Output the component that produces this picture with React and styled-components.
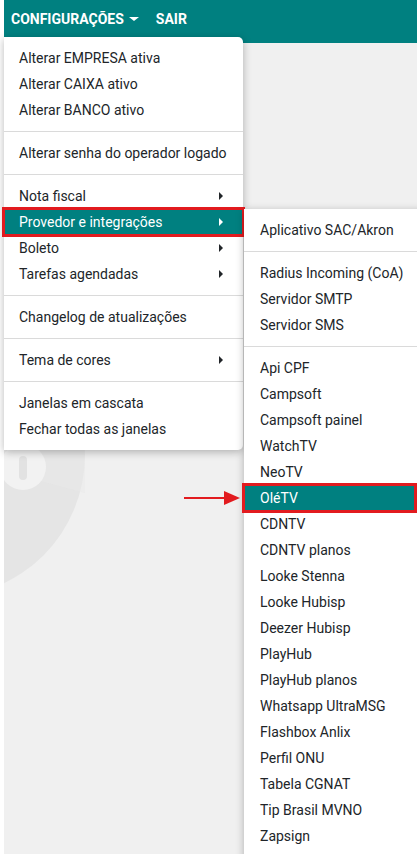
import { createGlobalStyle, styled } from 'styled-components';

const GlobalStyle = createGlobalStyle`
  html, body { margin: 0; padding: 0; background: #ffffff; }
  body { font-family: Roboto, "Liberation Sans", sans-serif; overflow: hidden; }
  * { box-sizing: border-box; }
`;

const Page = styled.div`
  position: relative;
  width: 417px;
  height: 854px;
  padding-left: 4px;
  display: flex;
  flex-direction: column;
  overflow: hidden;
  background: #ffffff;
`;

const TopBar = styled.header`
  height: 43px;
  background: #008080;
  display: flex;
  align-items: center;
  gap: 17px;
  padding: 0 0 6px 7px;
`;

const TopLink = styled.span`
  color: #ffffff;
  font-weight: 700;
  font-size: 14px;
  display: flex;
  align-items: center;
  gap: 5px;
`;

const Caret = styled.span`
  width: 0;
  height: 0;
  border-left: 5px solid transparent;
  border-right: 5px solid transparent;
  border-top: 4px solid #ffffff;
  margin-top: 1px;
`;

const Main = styled.main`
  position: relative;
  flex: 1;
  background: #f0f0f0;
`;

const Watermark = styled.svg`
  position: absolute;
  left: 0;
  top: 300px;
`;

const Menu = styled.div`
  position: absolute;
  left: ${p => p.$left}px;
  top: ${p => p.$top}px;
  width: ${p => p.$width}px;
  background: #ffffff;
  border-radius: ${p => (p.$sub ? '0' : '0 5px 5px 0')};
  box-shadow: 0 2px 8px rgba(0, 0, 0, 0.28);
  padding: 8px 0 ${p => (p.$sub ? 40 : 8)}px;
  z-index: ${p => (p.$sub ? 3 : 2)};
`;

const Item = styled.div`
  position: relative;
  height: 26px;
  display: flex;
  align-items: center;
  justify-content: space-between;
  margin-right: ${p => p.$trim || 0}px;
  padding: 0 20px 0 ${p => p.$pad}px;
  font-size: 14px;
  color: ${p => (p.$active ? '#ffffff' : '#212529')};
  background: ${p => (p.$active ? '#008080' : 'transparent')};
  outline: ${p => (p.$active ? '3px solid #e21b1f' : 'none')};
  outline-offset: -1px;
  white-space: nowrap;
  z-index: ${p => (p.$active ? 1 : 0)};
`;

const Arrow = styled.span`
  width: 0;
  height: 0;
  border-top: 4px solid transparent;
  border-bottom: 4px solid transparent;
  border-left: 4px solid ${p => (p.$light ? '#ffffff' : '#212529')};
`;

const Divider = styled.div`
  height: 1px;
  margin: 8px 0;
  background: #dadada;
`;

const Pointer = styled.svg`
  position: absolute;
  left: 184px;
  top: 490px;
  z-index: 4;
`;

const mainMenu = [
  ['Alterar EMPRESA ativa', 'Alterar CAIXA ativo', 'Alterar BANCO ativo'],
  ['Alterar senha do operador logado'],
  [
    { label: 'Nota fiscal', sub: true },
    { label: 'Provedor e integrações', sub: true, active: true },
    { label: 'Boleto', sub: true },
    { label: 'Tarefas agendadas', sub: true },
  ],
  ['Changelog de atualizações'],
  [{ label: 'Tema de cores', sub: true }],
  ['Janelas em cascata', 'Fechar todas as janelas'],
];

const subMenu = [
  ['Aplicativo SAC/Akron'],
  ['Radius Incoming (CoA)', 'Servidor SMTP', 'Servidor SMS'],
  [
    'Api CPF',
    'Campsoft',
    'Campsoft painel',
    'WatchTV',
    'NeoTV',
    { label: 'OléTV', active: true, trim: 9 },
    'CDNTV',
    'CDNTV planos',
    'Looke Stenna',
    'Looke Hubisp',
    'Deezer Hubisp',
    'PlayHub',
    'PlayHub planos',
    'Whatsapp UltraMSG',
    'Flashbox Anlix',
    'Perfil ONU',
    'Tabela CGNAT',
    'Tip Brasil MVNO',
    'Zapsign',
  ],
];

function MenuList({ groups, pad }) {
  return groups.map((group, gi) => (
    <div key={gi}>
      {gi > 0 && <Divider />}
      {group.map(entry => {
        const it = typeof entry === 'string' ? { label: entry } : entry;
        return (
          <Item key={it.label} $pad={pad} $active={it.active} $trim={it.trim}>
            <span>{it.label}</span>
            {it.sub && <Arrow $light={it.active} />}
          </Item>
        );
      })}
    </div>
  ));
}

export default function App() {
  return (
    <Page>
      <GlobalStyle />
      <TopBar>
        <TopLink>
          CONFIGURAÇÕES <Caret />
        </TopLink>
        <TopLink>SAIR</TopLink>
      </TopBar>
      <Main>
        <Watermark width="160" height="260" viewBox="0 0 160 260">
          <circle cx="-61" cy="112" r="142" fill="#e5e5e5" />
          <path d="M-61 112 L81 150 L81 70 Z" fill="#e9e9e9" opacity="0.5" />
          <circle cx="19" cy="124" r="23" fill="#f2f2f2" />
          <rect x="15" y="113" width="8" height="24" rx="4" fill="#e2e2e2" />
        </Watermark>
      </Main>

      <Menu $left={4} $top={37} $width={239}>
        <MenuList groups={mainMenu} pad={15} />
      </Menu>

      <Menu $sub $left={244} $top={209} $width={180}>
        <MenuList groups={subMenu} pad={16} />
      </Menu>

      <Pointer width="58" height="16" viewBox="0 0 58 16">
        <line x1="0" y1="8" x2="44" y2="8" stroke="#e21b1f" strokeWidth="2" />
        <polygon points="40,1 56,8 40,15" fill="#e21b1f" />
      </Pointer>
    </Page>
  );
}
